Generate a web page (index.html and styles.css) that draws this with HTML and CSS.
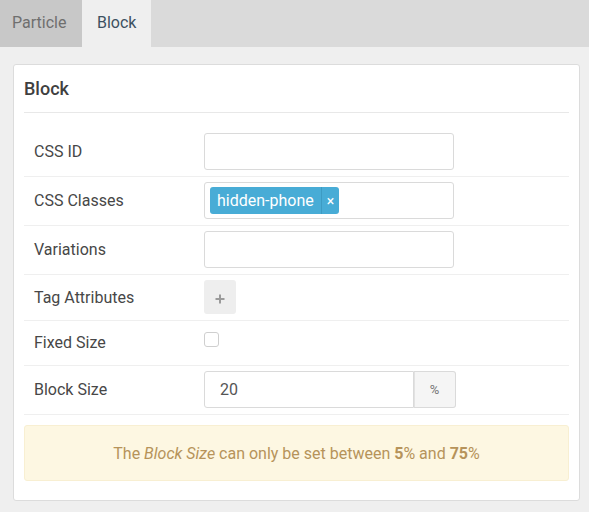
FILE: index.html
```html
<!DOCTYPE html>
<html>
<head>
<meta charset="utf-8">
<link rel="stylesheet" href="styles.css">
</head>
<body>
<div class="tabs">
  <div class="tab">Particle</div>
  <div class="tab active">Block</div>
</div>
<div class="card">
  <div class="card-title">Block</div>
  <div class="form">
    <div class="row">
      <div class="label">CSS ID</div>
      <div class="input"></div>
    </div>
    <div class="row">
      <div class="label">CSS Classes</div>
      <div class="input tags"><span class="tag"><span class="tag-text">hidden-phone</span><span class="tag-x">×</span></span></div>
    </div>
    <div class="row">
      <div class="label">Variations</div>
      <div class="input"></div>
    </div>
    <div class="row">
      <div class="label">Tag Attributes</div>
      <div class="add-btn"><svg width="10" height="10" viewBox="0 0 10 10"><path d="M5 0.5v9M0.5 5h9" stroke="#9a9a9a" stroke-width="2"/></svg></div>
    </div>
    <div class="row row-check">
      <div class="label">Fixed Size</div>
      <div class="checkbox"></div>
    </div>
    <div class="row">
      <div class="label">Block Size</div>
      <div class="group">
        <div class="group-input">20</div>
        <div class="addon">%</div>
      </div>
    </div>
  </div>
  <div class="alert">The <em>Block Size</em> can only be set between <b>5</b>% and <b>75</b>%</div>
</div>
</body>
</html>
```
FILE: styles.css
```css
html, body {
  margin: 0;
  padding: 0;
}
body {
  background: #efefef;
  font-family: Roboto, "Liberation Sans", sans-serif;
  color: #444;
  width: 589px;
  height: 512px;
  overflow: hidden;
}
.tabs {
  display: flex;
  height: 47px;
  background: #dadada;
}
.tab {
  padding: 0 14px 3px 12px;
  width: 56px;
  display: flex;
  align-items: center;
  font-size: 16px;
  color: #6f6f6f;
  background: #c8c8c8;
  height: 44px;
}
.tab.active {
  background: #efefef;
  color: #3d5161;
  padding: 0 15px 3px 15px;
  width: 39px;
}
.card {
  margin: 17px 9px 0 13px;
  background: #fff;
  border: 1px solid #dcdcdc;
  border-radius: 3px;
  padding: 0 10px 19px 10px;
}
.card-title {
  font-size: 18px;
  font-weight: 500;
  line-height: 20px;
  padding: 14px 0 13px 0;
  border-bottom: 1px solid #e8e8e8;
  color: #3f3f3f;
}
.form {
  padding-top: 15px;
}
.row {
  display: flex;
  align-items: center;
  padding: 5px 10px 6px 10px;
  border-bottom: 1px solid #efefef;
}
.label {
  width: 170px;
  font-size: 16px;
  color: #474747;
}
.input {
  width: 250px;
  height: 37px;
  box-sizing: border-box;
  border: 1px solid #dadada;
  border-radius: 3px;
  background: #fff;
}
.tags {
  display: flex;
  align-items: center;
  padding-left: 5px;
}
.tag {
  display: flex;
  align-items: stretch;
  height: 27px;
  background: #48acd6;
  border-radius: 3px;
  color: #fff;
  font-size: 16px;
}
.tag-text {
  display: flex;
  align-items: center;
  padding: 0 7px 0 7px;
  border-right: 1px solid #3d9bc3;
}
.tag-x {
  display: flex;
  align-items: center;
  padding: 0 5px 0 5px;
  font-size: 14px;
}
.add-btn {
  width: 32px;
  height: 34px;
  background: #eeeeee;
  border-radius: 3px;
  display: flex;
  align-items: center;
  justify-content: center;
  padding-top: 3px;
  box-sizing: border-box;
}
.row-check {
  align-items: flex-start;
  height: 33px;
}
.row-check .label {
  line-height: 33px;
}
.checkbox {
  width: 15px;
  height: 15px;
  box-sizing: border-box;
  border: 1px solid #cfcfcf;
  border-radius: 3px;
  margin-top: 6px;
}
.group {
  display: flex;
  height: 37px;
  width: 252px;
}
.group-input {
  flex: 1;
  box-sizing: border-box;
  border: 1px solid #dadada;
  border-radius: 3px 0 0 3px;
  font-size: 16px;
  color: #555;
  display: flex;
  align-items: center;
  padding-left: 15px;
}
.addon {
  width: 42px;
  box-sizing: border-box;
  border: 1px solid #dadada;
  border-left: none;
  border-radius: 0 3px 3px 0;
  background: #f5f5f5;
  color: #777;
  font-size: 13px;
  display: flex;
  align-items: center;
  justify-content: center;
  box-shadow: inset 1px 0 0 #e2e2e2;
}
.alert {
  margin-top: 10px;
  height: 56px;
  box-sizing: border-box;
  background: #fdf7e2;
  border: 1px solid #f8efd2;
  border-radius: 3px;
  color: #b6935a;
  font-size: 16px;
  display: flex;
  align-items: center;
  justify-content: center;
  white-space: pre;
}
.alert b {
  font-weight: 700;
}
```
